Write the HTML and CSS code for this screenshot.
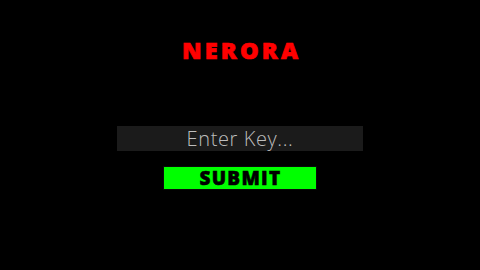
FILE: index.html
```html
<!DOCTYPE html>
<html lang="en">
<head>
    <meta charset="UTF-8">
    <meta name="viewport" content="width=device-width, initial-scale=1.0">
    <title>Nerora</title>
    <link rel="stylesheet" href="styles.css">
</head>
<body>
    <main class="page">
        <h1 class="title">NERORA</h1>
        <form class="keyForm">
            <input class="keyInput" type="text" placeholder="Enter Key...">
            <button class="submitBtn" type="button">SUBMIT</button>
        </form>
    </main>
</body>
</html>
```

FILE: styles.css
```css
body {
    margin: 0;
    padding: 0;
    background-color: #000000;
    font-family: "Open Sans", "Liberation Sans", sans-serif;
}
.page {
    width: 480px;
    height: 270px;
    display: flex;
    flex-direction: column;
    align-items: center;
}
.title {
    margin: 37px 0 0 0;
    font-family: "Open Sans", sans-serif;
    font-size: 23.5px;
    line-height: 26px;
    font-weight: 800;
    letter-spacing: 3.2px;
    padding-left: 3.2px;
    -webkit-text-stroke: 0.7px #ff0000;
    color: #ff0000;
}
.keyForm {
    margin-top: 63px;
    display: flex;
    flex-direction: column;
    align-items: center;
    gap: 15px;
}
.keyInput {
    box-sizing: border-box;
    width: 246px;
    height: 25px;
    margin: 0;
    padding: 0;
    border: none;
    background-color: #1b1b1b;
    text-align: center;
    font-family: "Open Sans", sans-serif;
    font-size: 20px;
    font-weight: 300;
    letter-spacing: 0.6px;
    color: #bdbdbd;
    outline: none;
}
.keyInput::placeholder {
    color: #bdbdbd;
}
.submitBtn {
    box-sizing: border-box;
    width: 154px;
    height: 24px;
    margin: 0;
    padding: 0 0 0 1px;
    border: 1px solid #0a0a0a;
    background-color: #00ff00;
    font-family: "Open Sans", sans-serif;
    font-size: 19px;
    line-height: 22px;
    font-weight: 800;
    letter-spacing: 1.3px;
    -webkit-text-stroke: 0.5px #000000;
    color: #000000;
}
```
